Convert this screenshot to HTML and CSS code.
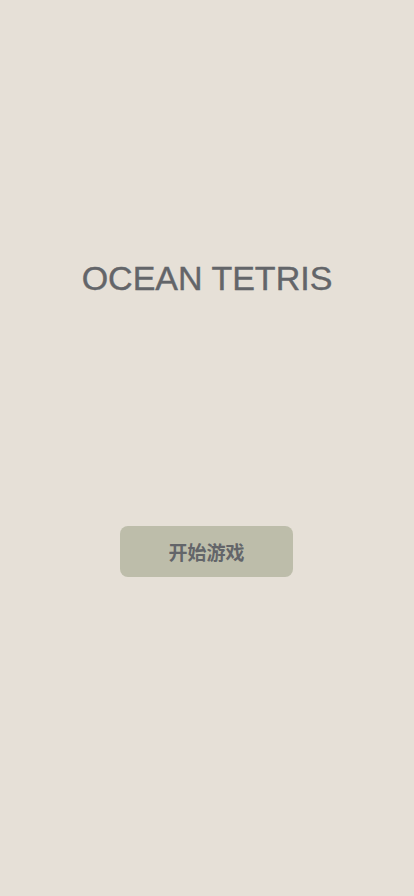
FILE: index.html
```html
<!DOCTYPE html>
<html lang="zh">
<head>
<meta charset="utf-8">
<meta name="viewport" content="width=device-width, initial-scale=1">
<title>Ocean Tetris</title>
<link rel="stylesheet" href="styles.css">
</head>
<body>
<main class="screen">
  <h1 class="title">OCEAN TETRIS</h1>
  <button class="start-btn" type="button">开始游戏</button>
</main>
</body>
</html>
```
FILE: styles.css
```css
html, body {
  margin: 0;
  padding: 0;
  background: #e6e0d7;
}
.screen {
  min-height: 896px;
  display: flex;
  flex-direction: column;
  align-items: center;
  font-family: "Liberation Sans", Arial, "Noto Sans CJK SC", sans-serif;
}
.title {
  margin: 258px 0 0;
  font-size: 34px;
  line-height: 40px;
  font-weight: 400;
  color: #636569;
  -webkit-text-stroke: 0.4px #636569;
}
.start-btn {
  margin-top: 228px;
  margin-right: 1px;
  width: 173px;
  height: 51px;
  border: none;
  border-radius: 8px;
  background: #bdbdaa;
  color: #636569;
  font-family: "Noto Sans CJK SC", sans-serif;
  font-size: 19px;
  font-weight: 700;
  padding: 0;
}
```
